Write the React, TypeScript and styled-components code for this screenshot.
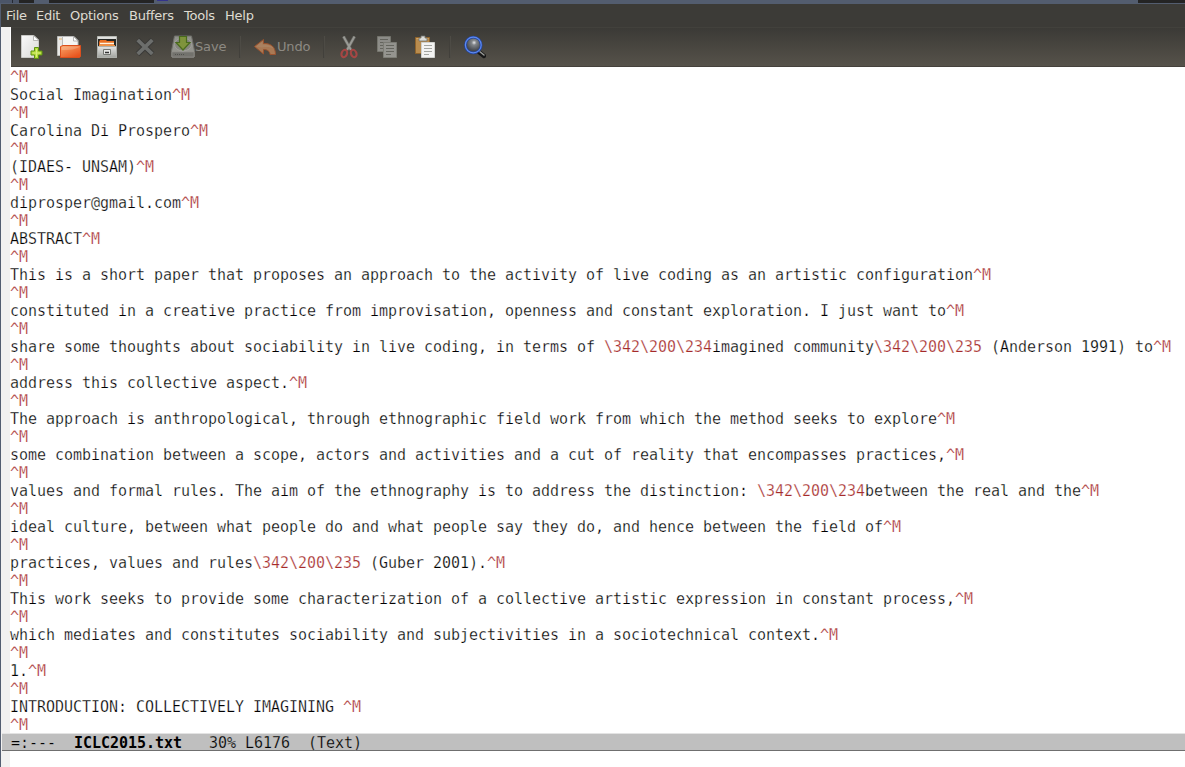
import React from "react";
import styled, { createGlobalStyle } from "styled-components";

const GlobalStyle = createGlobalStyle`
  *, *::before, *::after { box-sizing: border-box; }
  body { margin: 0; background: #fff; overflow: hidden; }
`;

const Frame = styled.div`
  width: 1185px;
  height: 767px;
  display: flex;
  flex-direction: column;
  background: #fff;
  border-left: 1px solid #535d70;
  font-family: "DejaVu Sans", sans-serif;
`;

const Desktop = styled.div`
  height: 4px;
  flex: none;
  display: flex;
  background: #535d6f;
  margin-left: -1px;
`;

const Patch = styled.div<{ $w: number; $h?: number; $c?: string }>`
  width: ${(p) => p.$w}px;
  height: ${(p) => p.$h ?? 3}px;
  background: ${(p) => p.$c ?? "transparent"};
`;

const MenuBar = styled.nav`
  height: 23px;
  flex: none;
  display: flex;
  align-items: center;
  background: #3c3b37;
  padding-left: 5px;
  color: #dfdbd2;
  font-size: 13px;
  line-height: 23px;
  letter-spacing: -0.25px;
`;

const MenuItem = styled.span<{ $w: number }>`
  width: ${(p) => p.$w}px;
  white-space: nowrap;
`;

const Body = styled.div`
  flex: 1;
  display: flex;
  min-height: 0;
`;

const Fringe = styled.div`
  width: 9px;
  flex: none;
  background: #f2f1f0;
`;

const Main = styled.div`
  flex: 1;
  min-width: 0;
  display: flex;
  flex-direction: column;
`;

const ToolBar = styled.div`
  height: 40px;
  flex: none;
  display: flex;
  align-items: flex-start;
  margin-left: 1px;
  padding: 7px 0 0 8px;
  border-top: 1px solid #42413c;
  border-bottom: 1px solid #45413c;
  background: linear-gradient(#3b3a36, #56524a);
`;

const Tool = styled.div<{ $w: number; $dim?: boolean }>`
  width: ${(p) => p.$w}px;
  height: 24px;
  flex: none;
  display: flex;
  align-items: center;
  color: #8d8a83;
  font-size: 13px;
  letter-spacing: -0.15px;
  svg { display: block; flex: none; opacity: ${(p) => (p.$dim ? 0.6 : 1)}; }
`;

const ToolLabel = styled.span`
  line-height: 24px;
  white-space: nowrap;
`;

const Separator = styled.div<{ $gap: number }>`
  width: 2px;
  height: 22px;
  flex: none;
  margin: 1px ${(p) => p.$gap}px 0 0;
  background: #42403b;
  border-right: 1px solid #4d4b45;
`;

const Buffer = styled.div`
  height: 666px;
  flex: none;
  padding-top: 1px;
  font: 15px/18px "DejaVu Sans Mono", monospace;
  letter-spacing: -0.0307px;
  color: #000;
  -webkit-text-stroke: 0.25px #fff;
`;

const Line = styled.div`
  height: 18px;
  white-space: pre;
`;

const Escape = styled.span`
  color: #a52a2a;
`;

const ModeLine = styled.div`
  height: 18px;
  flex: none;
  margin-left: -8px;
  padding-left: 9px;
  background: #bfbfbf;
  border-top: 1px solid #e3e3e3;
  border-bottom: 1px solid #6f6f6f;
  font: 15px/18px "DejaVu Sans Mono", monospace;
  letter-spacing: -0.0307px;
  white-space: pre;
  -webkit-text-stroke: 0.25px #bfbfbf;
`;

const FileName = styled.b`
  -webkit-text-stroke: 0;
`;

const Icon = ({ children }: { children: React.ReactNode }) => (
  <svg width="24" height="24" viewBox="0 0 24 24">{children}</svg>
);

const NewIcon = () => (
  <Icon>
    <defs>
      <linearGradient id="sheet" x2="1" y2="1"><stop stopColor="#fafafa" /><stop offset="1" stopColor="#d9d9d7" /></linearGradient>
    </defs>
    <path d="M2.500 .5H15l4.500 4.500V22.500H2.500z" fill="url(#sheet)" stroke="#c9c9c6" />
    <path d="M14.500 .5v5h5.500z" fill="#fff" stroke="#a8a8a4" strokeWidth=".8" />
    <path d="M15.500 12.500h4v3.500h3.500v4h-3.500v3.500h-4v-3.500H12v-4h3.500z" fill="#b5dc3a" stroke="#5c9312" />
    <path d="M17.500 14v8M13.500 18h8" stroke="#d7ef7a" />
  </Icon>
);

const OpenIcon = () => (
  <Icon>
    <defs>
      <linearGradient id="folder" x2=".7" y2="1"><stop stopColor="#f9a66b" /><stop offset="1" stopColor="#e9531c" /></linearGradient>
    </defs>
    <path d="M.5 1.500H12l2 2V20.500H.5z" fill="#e8e8e6" stroke="#bdbdb9" />
    <path d="M2 4h4" stroke="#e3b877" />
    <path d="M5.500 1.500H17l4 4V18H5.500z" fill="#f5f5f4" stroke="#bbb" />
    <path d="M16.500 1.500v4.500H21z" fill="#fff" stroke="#999" strokeWidth=".7" />
    <path d="M3.500 11.500l2.500-1h17.500v11l-1 1H3.500z" fill="url(#folder)" stroke="#dc4f1d" />
    <path d="M4.500 15C10 14.500 15 16 22.500 12v-.5H6l-1.500 1z" fill="#fff" opacity=".2" />
  </Icon>
);

const CabinetIcon = () => (
  <Icon>
    <defs>
      <linearGradient id="cabinet" y2="1" x2="0"><stop stopColor="#e4e4e2" /><stop offset="1" stopColor="#a2a49f" /></linearGradient>
    </defs>
    <path d="M2.500 1.500h19v21h-19z" fill="url(#cabinet)" stroke="#b8bab5" />
    <path d="M3 4h18v7H3z" fill="#252724" />
    <path d="M5 5h6l1 1h7v5H4V7z" fill="#e96f22" />
    <path d="M5 8.500h14" stroke="#fff4df" strokeWidth="1.500" />
    <path d="M4 10.500h16" stroke="#f09444" />
    <path d="M2.500 11.500h19v11h-19z" fill="url(#cabinet)" stroke="#adafaa" />
    <path d="M8.500 14.500h7v5h-7z" fill="#e7e7e5" stroke="#747671" />
    <path d="M10 17.500h4" stroke="#333" strokeWidth="1.500" />
  </Icon>
);

const CloseIcon = () => (
  <Icon>
    <path d="M4.500 4.800l15 14.500M19.500 4.800L4.500 19.300" stroke="#3a3a38" strokeWidth="5.600" />
    <path d="M4.700 5l14.600 14M19.300 5L4.700 19" stroke="#6c6e6c" strokeWidth="3.800" />
  </Icon>
);

const SaveIcon = () => (
  <Icon>
    <path d="M3.500 1h17l3 15v5.500l-1 1h-21l-1-1V16z" fill="#c5c7c1" stroke="#8c8e89" />
    <path d="M1 17h22v5H1z" fill="#8c8d89" stroke="#b5b6b1" strokeWidth=".7" />
    <ellipse cx="12" cy="9.500" rx="8.500" ry="6.500" fill="#b0b2ab" stroke="#dadbd6" />
    <path d="M4 19.500h9" stroke="#555" strokeDasharray="1 1" />
    <path d="M8.500 1.500h7v6H19L12 15 5 7.500h3.500z" fill="#a5c93c" stroke="#4d8609" strokeWidth="1.200" />
  </Icon>
);

const UndoIcon = () => (
  <Icon>
    <path d="M1.500 11.500L10.500 4.500V8.500C18 8 22.500 12 22.500 19.500H17C17 16.500 14.500 14.500 10.500 14.500V19z" fill="#e89a61" stroke="#cf5a23" strokeLinejoin="round" />
    <path d="M3 11.500l6.500-5v3.200C15 9.500 19 10.500 21 14c-3-2-7-2.500-12-1.500z" fill="#efb080" opacity=".7" />
  </Icon>
);

const CutIcon = () => (
  <Icon>
    <path d="M6.500 1.500L14 15M17.500 1.500L10 15" stroke="#71736f" strokeWidth="3.500" />
    <path d="M6.500 1.500L14 15M17.500 1.500L10 15" stroke="#d2d4cf" strokeWidth="2" />
    <ellipse cx="7.300" cy="18.500" rx="2.700" ry="3.800" transform="rotate(22 7.300 18.500)" fill="none" stroke="#e04444" strokeWidth="2.100" />
    <ellipse cx="16.700" cy="18.500" rx="2.700" ry="3.800" transform="rotate(-22 16.700 18.500)" fill="none" stroke="#e04444" strokeWidth="2.100" />
  </Icon>
);

const CopyIcon = () => (
  <Icon>
    <path d="M2.500 1.500h13v15h-13z" fill="#bdbeba" stroke="#96988f" />
    <path d="M5 4.500h8M5 7.500h8M5 10.500h3M5 13.500h3" stroke="#777972" />
    <path d="M8.500 7.500h13v15h-13z" fill="#c5c6c2" stroke="#9ea098" />
    <path d="M11 10.500h8M11 13.500h8M11 16.500h8M11 19.500h5" stroke="#777972" />
  </Icon>
);

const PasteIcon = () => (
  <Icon>
    <path d="M2.500 2.500h14v16h-14z" fill="#b98c4e" stroke="#8f632b" />
    <path d="M3.500 3.500h12" stroke="#d2a767" />
    <path d="M8 1h4v2h2v3H6V3h2z" fill="#dadbd8" stroke="#6f716d" strokeWidth=".8" />
    <path d="M8.500 7.500h13v15h-13z" fill="#f3f3f2" stroke="#d0d1ce" />
    <path d="M11 10.500h8M11 13.500h8M11 16.500h8M11 19.500h5" stroke="#a3a5a0" />
  </Icon>
);

const SearchIcon = () => (
  <Icon>
    <defs>
      <radialGradient id="lens" cx=".55" cy=".35"><stop stopColor="#e6e8ea" /><stop offset=".3" stopColor="#82868a" /><stop offset="1" stopColor="#464a50" /></radialGradient>
    </defs>
    <path d="M17 17l5 4" stroke="#181818" strokeWidth="4.400" strokeLinecap="round" />
    <path d="M17 16l5 4" stroke="#9a9c98" strokeWidth="1.500" strokeLinecap="round" />
    <circle cx="11.300" cy="10" r="7.900" fill="url(#lens)" stroke="#24479f" strokeWidth="2.700" />
    <circle cx="11.300" cy="10" r="7.900" fill="none" stroke="#5f8af0" strokeWidth="1.200" />
  </Icon>
);

const CR = "^M";
const paragraphs = [
  "",
  "Social Imagination",
  "Carolina Di Prospero",
  "(IDAES- UNSAM)",
  "diprosper@gmail.com",
  "ABSTRACT",
  "This is a short paper that proposes an approach to the activity of live coding as an artistic configuration",
  "constituted in a creative practice from improvisation, openness and constant exploration. I just want to",
  "share some thoughts about sociability in live coding, in terms of \\342\\200\\234imagined community\\342\\200\\235 (Anderson 1991) to",
  "address this collective aspect.",
  "The approach is anthropological, through ethnographic field work from which the method seeks to explore",
  "some combination between a scope, actors and activities and a cut of reality that encompasses practices,",
  "values and formal rules. The aim of the ethnography is to address the distinction: \\342\\200\\234between the real and the",
  "ideal culture, between what people do and what people say they do, and hence between the field of",
  "practices, values and rules\\342\\200\\235 (Guber 2001).",
  "This work seeks to provide some characterization of a collective artistic expression in constant process,",
  "which mediates and constitutes sociability and subjectivities in a sociotechnical context.",
  "1.",
  "INTRODUCTION: COLLECTIVELY IMAGINING ",
];
const lines = paragraphs.flatMap((p, i) => (i === 0 ? [p] : [p, ""]));

const menus: [string, number][] = [
  ["File", 30], ["Edit", 34], ["Options", 59], ["Buffers", 55], ["Tools", 41], ["Help", 40],
];

export default function App() {
  return (
    <>
      <GlobalStyle />
      <Frame>
        <Desktop>
          <Patch $w={12} $c="#4b5568" />
          <Patch $w={1} $c="#252932" />
          <Patch $w={6} $c="#4b5568" />
          <Patch $w={15} $c="#242424" />
          <Patch $w={15} />
          <Patch $w={105} $c="#242424" />
          <Patch $w={3} />
          <Patch $w={11} $h={1} $c="#34338c" />
          <Patch $w={970} />
          <Patch $w={47} $c="#242424" />
        </Desktop>
        <MenuBar>
          {menus.map(([name, w]) => <MenuItem key={name} $w={w}>{name}</MenuItem>)}
        </MenuBar>
        <Body>
          <Fringe />
          <Main>
            <ToolBar>
              <Tool $w={38}><NewIcon /></Tool>
              <Tool $w={38}><OpenIcon /></Tool>
              <Tool $w={38}><CabinetIcon /></Tool>
              <Tool $w={38}><CloseIcon /></Tool>
              <Tool $w={68} $dim><SaveIcon /><ToolLabel>Save</ToolLabel></Tool>
              <Separator $gap={12} />
              <Tool $w={70} $dim><UndoIcon /><ToolLabel>Undo</ToolLabel></Tool>
              <Separator $gap={12} />
              <Tool $w={38} $dim><CutIcon /></Tool>
              <Tool $w={38} $dim><CopyIcon /></Tool>
              <Tool $w={36}><PasteIcon /></Tool>
              <Separator $gap={11} />
              <Tool $w={24}><SearchIcon /></Tool>
            </ToolBar>
            <Buffer>
              {lines.map((text, i) => (
                <Line key={i}>
                  {text.split(/((?:\\\d{3})+)/).map((part, j) =>
                    j % 2 ? <Escape key={j}>{part}</Escape> : part
                  )}
                  <Escape>{CR}</Escape>
                </Line>
              ))}
            </Buffer>
            <ModeLine>{"=:---  "}<FileName>ICLC2015.txt</FileName>{"   30% L6176  (Text)"}</ModeLine>
          </Main>
        </Body>
      </Frame>
    </>
  );
}
